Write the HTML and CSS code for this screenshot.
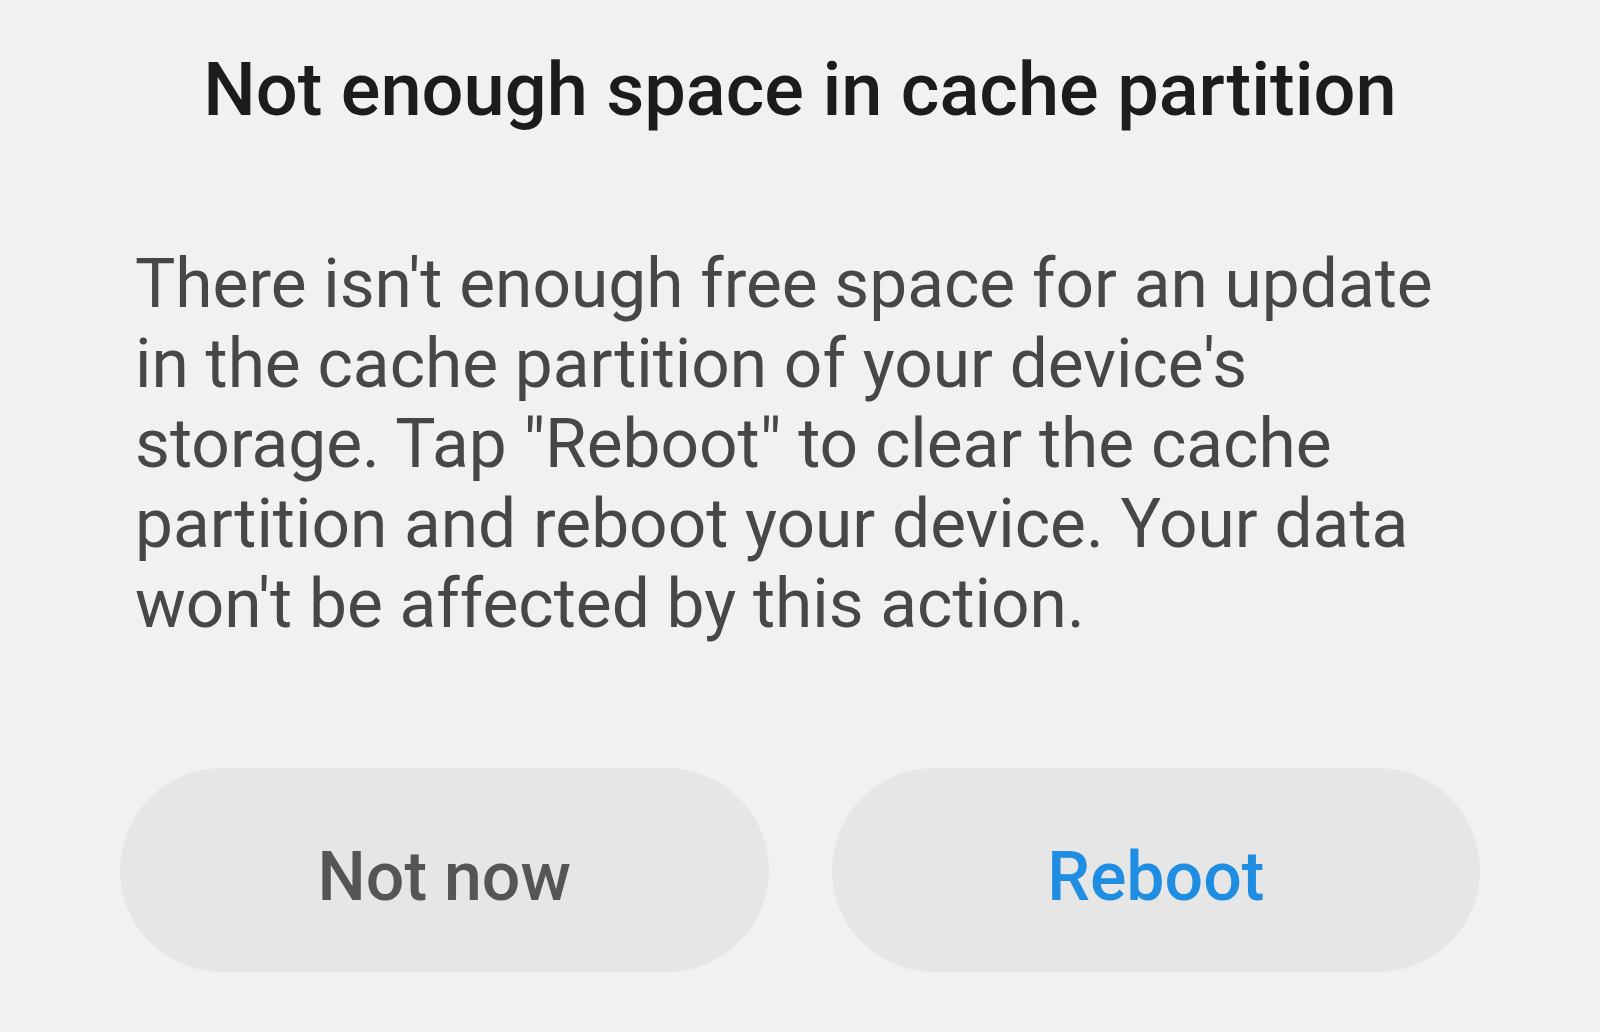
FILE: index.html
```html
<!DOCTYPE html>
<html lang="en">
<head>
    <meta charset="UTF-8">
    <meta name="viewport" content="width=device-width, initial-scale=1.0">
    <title>Not enough space in cache partition</title>
    <link rel="stylesheet" href="styles.css">
</head>
<body>
    <div class="dialog">
        <h1 class="dialog-title">Not enough space in cache partition</h1>
        <p class="dialog-message">There isn't enough free space for an update in the cache partition of your device's storage. Tap "Reboot" to clear the cache partition and reboot your device. Your data won't be affected by this action.</p>
        <div class="dialog-actions">
            <button class="btn btn-cancel">Not now</button>
            <button class="btn btn-confirm">Reboot</button>
        </div>
    </div>
</body>
</html>
```

FILE: styles.css
```css
body {
    margin: 0;
    background-color: #f2f1f2;
    font-family: Roboto, "Noto Sans", Arial, sans-serif;
}
.dialog {
    height: 1032px;
    padding-top: 40px;
    box-sizing: border-box;
}
.dialog-title {
    margin: 0;
    font-size: 74px;
    font-weight: 500;
    line-height: 100px;
    color: #1c1c1c;
    text-align: center;
}
.dialog-message {
    margin: 104px 0 0;
    padding: 0 140px 0 135px;
    font-size: 67.6px;
    line-height: 80px;
    color: #474747;
}
.dialog-actions {
    display: flex;
    gap: 63px;
    margin-top: 124px;
    padding: 0 120px;
}
.btn {
    flex: 1;
    height: 204px;
    padding: 14px 0 0;
    border: none;
    border-radius: 102px;
    background-color: #e7e6e7;
    font-family: inherit;
    font-size: 68px;
    font-weight: 500;
    cursor: pointer;
}
.btn-cancel {
    color: #555555;
}
.btn-confirm {
    color: #1f8de2;
}
```
